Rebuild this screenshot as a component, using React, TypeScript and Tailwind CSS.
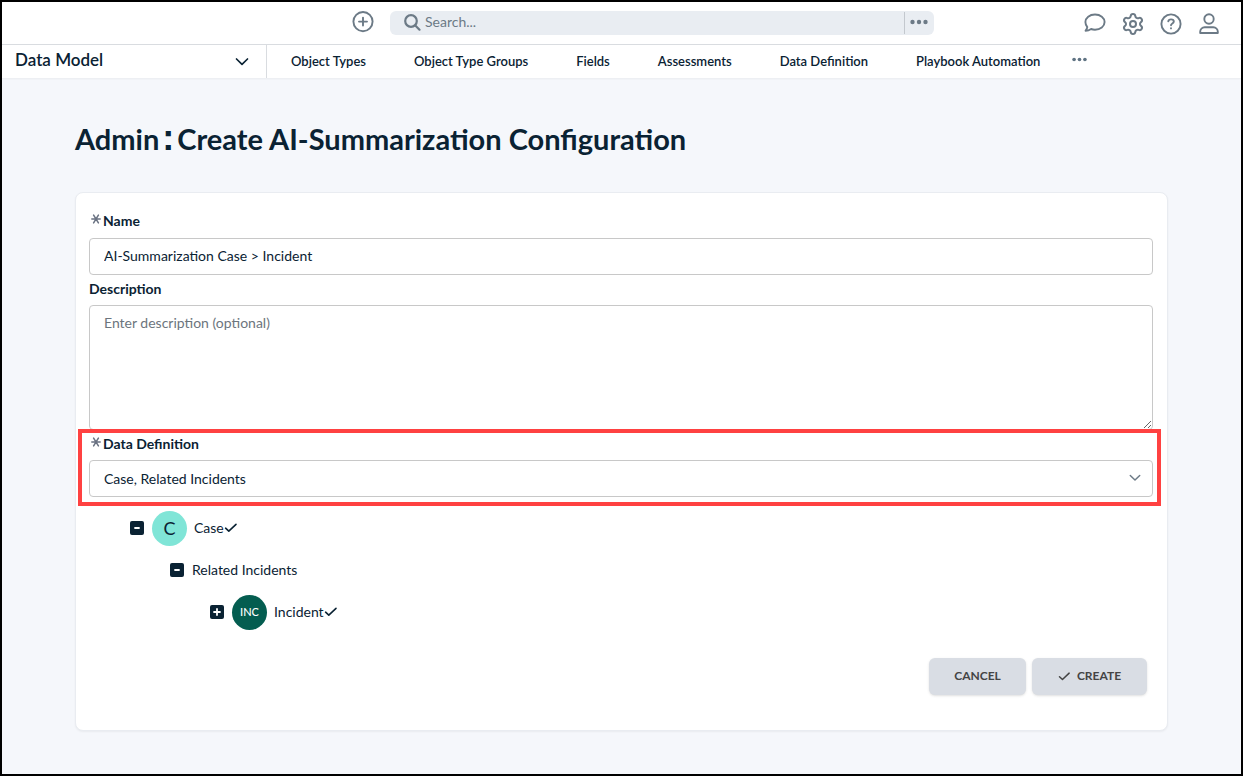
import { useState } from "react";
import type { ReactNode } from "react";
import { Settings } from "lucide-react";

const NAV_ITEMS = [
  "Object Types",
  "Object Type Groups",
  "Fields",
  "Assessments",
  "Data Definition",
  "Playbook Automation",
];

function Dots({ className }: { className: string }) {
  return (
    <svg viewBox="0 0 18 6" className={className} fill="currentColor" aria-hidden="true">
      <circle cx="2.5" cy="3" r="2.2" />
      <circle cx="9" cy="3" r="2.2" />
      <circle cx="15.5" cy="3" r="2.2" />
    </svg>
  );
}

function Chevron({ className }: { className: string }) {
  return (
    <svg
      viewBox="0 0 14 14"
      className={className}
      fill="none"
      stroke="currentColor"
      strokeWidth="1.7"
      strokeLinecap="round"
      strokeLinejoin="round"
      aria-hidden="true"
    >
      <path d="M1.5 4 7 9.3l5.5-5.3" />
    </svg>
  );
}

function Check({ className }: { className: string }) {
  return (
    <svg
      viewBox="0 0 14 14"
      className={className}
      fill="none"
      stroke="currentColor"
      strokeWidth="1.6"
      strokeLinecap="round"
      strokeLinejoin="round"
      aria-hidden="true"
    >
      <path d="M1.6 7.2 4.8 10.2l7.2-6.8" />
    </svg>
  );
}

function Required() {
  return (
    <svg
      viewBox="0 0 10 10"
      className="mb-[5px] h-[10px] w-[10px] text-gray-500"
      stroke="currentColor"
      strokeWidth="1.5"
      strokeLinecap="round"
      aria-hidden="true"
    >
      <path d="M0.8 5h8.4M2.6 1.1l4.8 7.8M7.4 1.1 2.6 8.9" />
    </svg>
  );
}

function HeaderButton({ label, children }: { label: string; children: ReactNode }) {
  return (
    <button type="button" aria-label={label} className="text-[#6c7a86]">
      <svg
        viewBox="0 0 22 22"
        className="h-[22px] w-[22px] overflow-visible"
        fill="none"
        stroke="currentColor"
        strokeWidth="1.9"
        strokeLinecap="round"
        strokeLinejoin="round"
      >
        {children}
      </svg>
    </button>
  );
}

function Toggle({ open, label, onClick }: { open: boolean; label: string; onClick: () => void }) {
  return (
    <button type="button" aria-label={label} aria-expanded={open} onClick={onClick}>
      <svg viewBox="0 0 14 14" className="h-[14px] w-[14px]" aria-hidden="true">
        <rect width="14" height="14" rx="2" fill="#0a2233" />
        <path
          d={open ? "M5 7h4" : "M4 7h6M7 4v6"}
          stroke="#fff"
          strokeWidth="1.8"
          strokeLinecap="round"
        />
      </svg>
    </button>
  );
}

export default function App() {
  const [name, setName] = useState("AI-Summarization Case > Incident");
  const [caseOpen, setCaseOpen] = useState(true);
  const [relatedOpen, setRelatedOpen] = useState(true);
  const [incidentOpen, setIncidentOpen] = useState(false);

  return (
    <div className="flex min-h-screen flex-col border-2 border-black bg-[#f5f7fb] font-['Lato','Noto_Sans',sans-serif] text-sm text-[#0a2233]">
      <header className="flex h-[43px] items-center border-b border-[#d9dce0] bg-white pr-[21px]">
        <div className="flex flex-1 items-center gap-4 pl-[350px]">
          <HeaderButton label="Create new">
            <circle cx="11" cy="9.6" r="9.6" />
            <path d="M11 5.6v8M7 9.6h8" />
          </HeaderButton>
          <div className="flex h-6 w-[544px] items-center rounded-md bg-[#e9edf2] text-[#6c7a86]">
            <svg
              viewBox="0 0 18 18"
              className="ml-[13px] h-[18px] w-[18px]"
              fill="none"
              stroke="currentColor"
              strokeWidth="2.2"
              strokeLinecap="round"
              aria-hidden="true"
            >
              <circle cx="8" cy="7" r="5.8" />
              <path d="m12.3 11.4 4.2 4.3" />
            </svg>
            <input
              type="search"
              aria-label="Search"
              placeholder="Search..."
              className="min-w-0 flex-1 bg-transparent px-1 pb-[2px] outline-none placeholder:text-[#6c7a86]"
            />
            <button
              type="button"
              aria-label="Search options"
              className="flex h-[22px] w-[30px] items-center justify-center border-l border-[#c3c8ce] pr-[2px] pb-[2px]"
            >
              <Dots className="h-[6px] w-[18px]" />
            </button>
          </div>
        </div>
        <div className="flex items-center gap-4">
          <HeaderButton label="Messages">
            <path d="M11 2.5c5.4 0 9.6 3.3 9.6 7.6s-4.2 7.6-9.6 7.6c-1.4 0-2.7-.2-3.9-.7-1.5 1-3.5 1.7-5.5 1.7.9-1.1 1.5-2.4 1.7-3.6C2.1 13.7 1.4 12 1.4 10.1 1.4 5.8 5.6 2.5 11 2.5Z" />
          </HeaderButton>
          <button type="button" aria-label="Settings" className="-mx-px pt-px text-[#6c7a86]">
            <Settings className="h-6 w-6" strokeWidth={2} />
          </button>
          <HeaderButton label="Help">
            <circle cx="11" cy="12" r="9.6" />
            <path d="M8.3 9.4c.2-1.3 1.3-2 2.7-2 1.6 0 2.8.8 2.8 2.2 0 1.9-2.6 1.9-2.8 3.6M11 16.2v.2" />
          </HeaderButton>
          <HeaderButton label="Account">
            <circle cx="11" cy="7" r="4.7" />
            <path d="M2.2 21v-1.2c0-2.5 2-4.5 4.5-4.5h8.6c2.5 0 4.5 2 4.5 4.5V21Z" />
          </HeaderButton>
        </div>
      </header>

      <nav className="flex h-[33px] items-center bg-white shadow-xs">
        <button
          type="button"
          className="flex h-full w-[265px] items-center justify-between border-r border-[#d9dce0] pr-[17px] pl-[13px] text-[17px] font-semibold"
        >
          <span className="pb-[2px]">Data Model</span>
          <Chevron className="h-[14px] w-[14px]" />
        </button>
        <div className="flex items-center gap-12 pl-6 text-[13px] font-semibold">
          {NAV_ITEMS.map((item) => (
            <a key={item} href="#" className="whitespace-nowrap">
              {item}
            </a>
          ))}
        </div>
        <button type="button" aria-label="More" className="ml-8 pb-1 text-[#5f7383]">
          <Dots className="h-[5px] w-[15px]" />
        </button>
      </nav>

      <main className="px-[73px] pt-10 pb-8">
        <h1 className="h-10 text-[29px] leading-10 font-bold">
          Admin
          <span className="px-[3px] font-['Liberation_Sans',sans-serif] text-4xl leading-10">:</span>
          Create AI-Summarization Configuration
        </h1>

        <form
          className="mt-[34px] rounded-lg border border-[#e9ecf1] bg-white pt-[18px] pr-[14px] pb-[35px] pl-[13px] shadow-xs"
          onSubmit={(event) => event.preventDefault()}
        >
          <label htmlFor="name" className="flex h-5 items-center gap-0.5 pl-0.5 font-bold">
            <Required />
            Name
          </label>
          <input
            id="name"
            value={name}
            onChange={(event) => setName(event.target.value)}
            className="mt-[7px] block h-[37px] w-full rounded border border-[#c8c8c8] bg-white px-[14px] pb-[2px]"
          />

          <label htmlFor="description" className="mt-1 flex h-5 items-center font-bold">
            Description
          </label>
          <textarea
            id="description"
            placeholder="Enter description (optional)"
            className="mt-[6px] block h-[125px] w-full rounded border border-[#c8c8c8] bg-white px-[14px] py-[7px] placeholder:text-[#6c757d]"
          />

          <div className="relative pt-1">
            <label htmlFor="definition" className="flex h-5 items-center gap-0.5 pl-0.5 font-bold">
              <Required />
              Data Definition
            </label>
            <div className="relative mt-[6px]">
              <select
                id="definition"
                className="block h-[37px] w-full appearance-none rounded border border-[#c8c8c8] bg-white px-[14px]"
              >
                <option>Case, Related Incidents</option>
              </select>
              <Chevron className="pointer-events-none absolute top-3 right-3 h-3 w-3 text-[#6c7a86]" />
            </div>
            <div className="pointer-events-none absolute -top-px -right-2 -bottom-[9px] -left-[11px] border-4 border-[#ff4141]" />
          </div>

          <ul className="mt-[10px] pl-[41px]">
            <li>
              <div className="flex h-[42px] items-center">
                <Toggle open={caseOpen} label="Toggle Case" onClick={() => setCaseOpen(!caseOpen)} />
                <span className="ml-2 flex h-[35px] w-[35px] items-center justify-center rounded-full bg-[#80e5d7] text-lg">
                  C
                </span>
                <span className="ml-[7px]">Case</span>
                <Check className="h-[14px] w-[14px]" />
              </div>
              {caseOpen && (
                <ul className="pl-10">
                  <li>
                    <div className="flex h-[42px] items-center">
                      <Toggle
                        open={relatedOpen}
                        label="Toggle Related Incidents"
                        onClick={() => setRelatedOpen(!relatedOpen)}
                      />
                      <span className="ml-2">Related Incidents</span>
                    </div>
                    {relatedOpen && (
                      <ul className="pl-10">
                        <li className="flex h-[42px] items-center">
                          <Toggle
                            open={incidentOpen}
                            label="Toggle Incident"
                            onClick={() => setIncidentOpen(!incidentOpen)}
                          />
                          <span className="ml-2 flex h-[35px] w-[35px] items-center justify-center rounded-full bg-[#045d50] text-[11px] font-medium text-white">
                            INC
                          </span>
                          <span className="ml-[7px]">Incident</span>
                          <Check className="h-[14px] w-[14px]" />
                        </li>
                      </ul>
                    )}
                  </li>
                </ul>
              )}
            </li>
          </ul>

          <div className="mt-[25px] flex justify-end gap-[6px] pr-[6px] text-xs font-bold text-[#444]">
            <button type="button" className="h-[37px] w-[97px] rounded-md bg-[#d9dde4] pb-px shadow">
              CANCEL
            </button>
            <button
              type="submit"
              className="flex h-[37px] w-[115px] items-center justify-center gap-[6px] rounded-md bg-[#d9dde4] pb-px shadow"
            >
              <Check className="h-[13px] w-[13px]" />
              CREATE
            </button>
          </div>
        </form>
      </main>
    </div>
  );
}
